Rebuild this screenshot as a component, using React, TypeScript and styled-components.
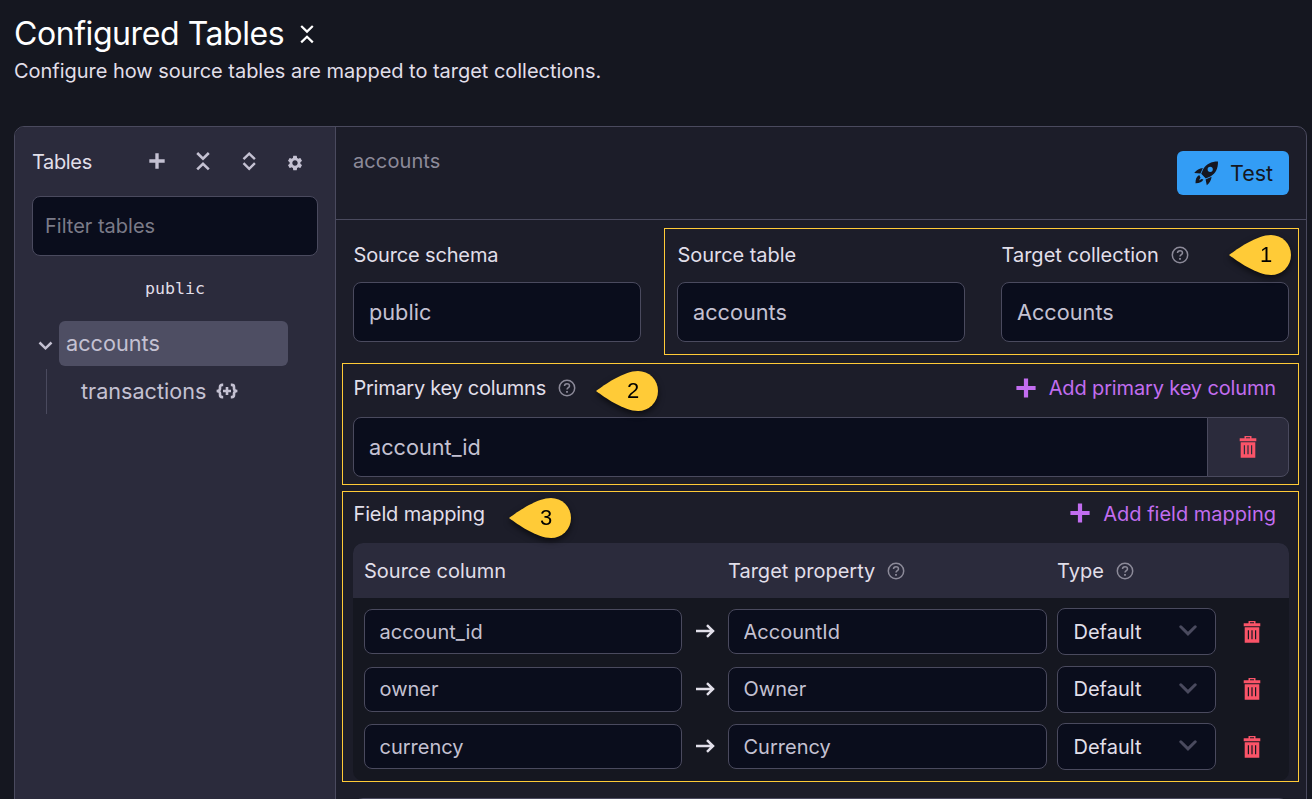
import React from 'react';
import styled, { createGlobalStyle } from 'styled-components';
import { MdSettings } from 'react-icons/md';

const GlobalStyle = createGlobalStyle`
  *, *::before, *::after { box-sizing: border-box; }
  body {
    margin: 0;
    background: #151720;
    color: #e1dfe9;
    font-family: Inter, "Liberation Sans", sans-serif;
    font-size: 20px;
    line-height: 28px;
  }
  input, button { font: inherit; color: inherit; letter-spacing: inherit; }
  svg { display: block; flex: none; }
`;

const Page = styled.main`
  height: 799px;
  overflow: hidden;
  padding: 14px 5px 0 14px;
  display: flex;
  flex-direction: column;
  position: relative;
`;

const Label = styled.span<{ $track?: number; $size?: number }>`
  font-size: ${p => (p.$size ? `${p.$size}px` : 'inherit')};
  letter-spacing: ${p => p.$track ?? 0}px;
  white-space: nowrap;
`;

const Title = styled.h1`
  margin: 0;
  height: 40px;
  display: flex;
  align-items: center;
  gap: 13px;
  color: #fff;
  font-size: 32px;
  font-weight: 400;
  line-height: 40px;
`;

const Subtitle = styled.p`
  margin: 3px 0 41px;
`;

const Panel = styled.section`
  flex: none;
  height: 690px;
  display: flex;
  border: 1px solid #4a4a5e;
  border-radius: 10px;
  overflow: hidden;
  background: #1c1d29;
`;

const Sidebar = styled.aside`
  width: 321px;
  flex: none;
  border-right: 1px solid #4a4a5e;
  background: #2b2b3c;
  padding: 20px 17px;
`;

const SidebarHead = styled.div`
  display: flex;
  align-items: center;
  height: 28px;
  color: #c4c1d2;
`;

const SidebarTitle = styled(Label)`
  width: 114.5px;
  padding-top: 2px;
  color: #e1dfe9;
`;

const IconRow = styled.div`
  display: flex;
  align-items: center;
  gap: 26px;
`;

const GearSlot = styled.span`
  width: 20px;
  display: flex;
  justify-content: center;
  padding-top: 3px;
`;

const Field = styled.input<{ $height?: number; $pad?: number; $size?: number }>`
  display: block;
  width: 100%;
  min-width: 0;
  height: ${p => p.$height ?? 60}px;
  padding: 0 ${p => p.$pad ?? 15}px;
  border: 1px solid #4a4a5e;
  border-radius: 8px;
  background: #0a0d1c;
  color: #c4c1d2;
  font-size: ${p => p.$size ?? 21.7}px;
  outline: none;
  &::placeholder { color: #7b7b88; opacity: 1; }
`;

const FilterField = styled(Field)`
  margin-top: 21px;
`;

const SchemaName = styled.div`
  margin: 19px 0 18px;
  text-align: center;
  font-family: "DejaVu Sans Mono", monospace;
  font-size: 16.6px;
`;

const TreeItem = styled.div`
  display: flex;
  align-items: center;
  height: 45px;
  color: #c4c1d2;
`;

const Twisty = styled.span`
  width: 27px;
  display: flex;
  justify-content: center;
  padding-top: 5px;
`;

const Selected = styled.div`
  width: 229px;
  height: 45px;
  padding: 8px 7px;
  border-radius: 6px;
  background: #4e4e63;
`;

const TreeChild = styled(TreeItem)`
  margin: 3px 0 0 14px;
  padding: 0 0 1px 34px;
  gap: 10px;
  border-left: 1px solid #4a4a5e;
`;

const Content = styled.div`
  flex: 1;
  min-width: 0;
`;

const ContentHead = styled.header`
  height: 93px;
  display: flex;
  align-items: flex-start;
  justify-content: space-between;
  padding: 20px 17px 0;
  border-bottom: 1px solid #4a4a5e;
  color: #8c8a99;
`;

const TestButton = styled.button`
  width: 112px;
  height: 44px;
  margin-top: 4px;
  padding: 0 0 0 17px;
  display: flex;
  align-items: center;
  gap: 11px;
  border: 0;
  border-radius: 6px;
  background: #339df5;
  color: #151720;
`;

const Form = styled.div`
  padding: 20px 17px 0;
`;

const FieldGrid = styled.div`
  display: grid;
  grid-template-columns: repeat(3, 288px);
  gap: 36px;
`;

const FieldLabel = styled.div<{ $bottom?: number }>`
  display: flex;
  align-items: center;
  height: 30px;
  gap: 12px;
  padding-left: 0.5px;
  margin-bottom: ${p => p.$bottom ?? 0}px;
`;

const SectionHead = styled.div`
  display: flex;
  justify-content: space-between;
  align-items: center;
  height: 30px;
`;

const AddButton = styled.button<{ $lift: number }>`
  display: flex;
  align-items: center;
  gap: 13px;
  padding: 0 13px 0 0;
  border: 0;
  background: none;
  color: #c26df0;
  svg { margin-bottom: ${p => p.$lift}px; }
`;

const KeySection = styled.section`
  margin-top: 31px;
`;

const KeyRow = styled.div`
  display: flex;
  margin-top: 14px;
`;

const KeyField = styled(Field)`
  flex: 1;
  border-radius: 8px 0 0 8px;
`;

const KeyDelete = styled.button`
  width: 82px;
  height: 60px;
  margin-left: -1px;
  padding: 0;
  display: grid;
  place-items: center;
  border: 1px solid #4a4a5e;
  border-radius: 0 8px 8px 0;
  background: #2b2b3c;
`;

const MapSection = styled.section`
  margin-top: 22px;
`;

const MapTable = styled.div`
  margin-top: 14px;
  border-radius: 10px;
  overflow: hidden;
  background: #151720;
`;

const MapHead = styled.div`
  display: grid;
  grid-template-columns: 364px 329px 1fr;
  align-items: center;
  height: 55px;
  padding-left: 10.500px;
  background: #2b2b3c;
`;

const MapBody = styled.div`
  display: flex;
  flex-direction: column;
  padding: 10px 0 11px 11px;
  gap: 10.5px;
`;

const MapRow = styled.div`
  display: grid;
  grid-template-columns: 318px 46px 319px 10px 159px 72px;
  align-items: center;
  justify-items: center;
  height: 47px;
`;

const Select = styled.div`
  grid-column: 5;
  width: 159px;
  height: 47px;
  padding: 0 18px 0 15.5px;
  display: flex;
  align-items: center;
  justify-content: space-between;
  border: 1px solid #4a4a5e;
  border-radius: 8px;
  background: #0a0d1c;
`;

const SelectMark = styled.span`
  display: flex;
  padding-bottom: 1px;
  color: #4a4a5e;
`;

const NextCard = styled.div`
  height: 60px;
  margin-top: 17px;
  border: 1px solid #4a4a5e;
  border-radius: 10px;
`;

const Outline = styled.div<{ $x: number; $y: number; $w: number; $h: number }>`
  position: absolute;
  left: ${p => p.$x}px;
  top: ${p => p.$y}px;
  width: ${p => p.$w}px;
  height: ${p => p.$h}px;
  border: 1px solid #ffcb37;
  pointer-events: none;
`;

const Pin = styled.div<{ $x: number; $y: number }>`
  position: absolute;
  left: ${p => p.$x}px;
  top: ${p => p.$y}px;
  width: 62px;
  height: 40px;
  display: grid;
  color: #000;
  filter: drop-shadow(0 3px 3px rgba(0, 0, 0, 0.6));
  > * { grid-area: 1 / 1; }
`;

const PinNumber = styled.span`
  position: relative;
  padding-left: 12px;
  text-align: center;
  line-height: 40px;
  font-family: "Liberation Sans", sans-serif;
  font-size: 22px;
`;

const Plus = ({ inset = 0 }: { inset?: number }) => (
  <svg width="20" height="20" viewBox={`${-inset} ${-inset} ${20 + 2 * inset} ${20 + 2 * inset}`} fill="currentColor">
    <path d="M7.9 0.4h4.200v7.500h7.500v4.200h-7.500v7.500H7.900v-7.500H0.400V7.900h7.500z" />
  </svg>
);

const Collapse = ({ weight = 2.6 }: { weight?: number }) => (
  <svg width="20" height="20" viewBox="0 0 20 20" fill="none" stroke="currentColor" strokeWidth={weight}>
    <path d="M4.2 2 10 7.600l5.800-5.600M4.200 18.400l5.800-5.600 5.800 5.600" />
  </svg>
);

const Expand = () => (
  <svg width="20" height="20" viewBox="0 0 20 20" fill="none" stroke="currentColor" strokeWidth="2.4">
    <path d="M4.500 8.200 10.200 2.600 15.900 8.200M4.500 12.200l5.700 5.600 5.700-5.600" />
  </svg>
);

const Chevron = ({ width = 18, weight = 3, cap = 'round' }: { width?: number; weight?: number; cap?: 'round' | 'butt' }) => (
  <svg width={width} height={width * 0.62} viewBox="0 0 18 11.160" fill="none" stroke="currentColor" strokeWidth={weight} strokeLinecap={cap}>
    <path d="M1.800 1.800 9 8.800l7.200-7" />
  </svg>
);

const Help = () => (
  <svg width="18" height="18" viewBox="0 0 18 18" fill="none" stroke="#8c8a99" strokeWidth="1.5">
    <circle cx="9" cy="9" r="7.700" />
    <path d="M6.500 7.100C6.500 5.500 7.600 4.700 9 4.700s2.500.9 2.500 2.200c0 1.700-2.500 1.900-2.500 3.700" />
    <path d="M9 11.900v1.800" strokeWidth="1.800" />
  </svg>
);

const Trash = () => (
  <svg width="18" height="24" viewBox="0 0 18 24" fill="#fa5468">
    <path fillRule="evenodd" d="M5.500 1h7v2.300H17.300v2.900H.7V3.300h4.800zM7 2.300v1h4v-1z" />
    <path fillRule="evenodd" d="M1.700 7.200h14.600v15.500H1.700zM4.800 10.200v9h1.200v-9zM8.400 10.200v9h1.200v-9zM12 10.200v9h1.200v-9z" />
  </svg>
);

const Arrow = () => (
  <svg width="20" height="15" viewBox="0 0 20 15" fill="none" stroke="#e1dfe9" strokeWidth="2.500">
    <path d="M1 7h17M12 1.200 18 7l-6 5.800" />
  </svg>
);

const BracesPlus = () => (
  <svg width="22" height="16" viewBox="0 0 22 16" fill="none" stroke="currentColor" strokeWidth="2.600">
    <path d="M7.200 1.900H6.200Q4 1.900 4 4v1.500Q4 8 .6 8 4 8 4 10.500V12q0 2.100 2.200 2.100h1" />
    <path d="M14.800 1.900h1Q18 1.900 18 4v1.500Q18 8 21.400 8 18 8 18 10.500V12q0 2.100-2.200 2.100h-1" />
    <path d="M11 4v8M7 8h8" />
  </svg>
);

const Rocket = () => (
  <svg width="25" height="25" viewBox="0 0 25 25" fill="currentColor">
    <path fillRule="evenodd" d="M24 .4C17 .4 12.300 3 9.300 8L7.200 12.800l4.600 4.600 5-2.200C21.600 12.300 24.100 7.500 24 .4zM16.200 5.700a2.600 2.600 0 1 1 0 5.200 2.600 2.600 0 0 1 0-5.200z" />
    <path d="M8.900 7C5.500 7.300 2.500 9 .2 12.100l6.200.5zM17.600 15.800c-.4 3.500-2 6.200-4.800 8.500l-1.200-5.800z" />
    <path d="M5.200 14C2.300 15.500 1.500 18.400 1.500 22.200c3.800.1 6.500-.8 7.900-3.600l-1.800-.6-2.600 1.400 1.500-2.900z" />
  </svg>
);

const pins = [
  { n: 1, x: 1229, y: 235 },
  { n: 2, x: 596, y: 371 },
  { n: 3, x: 509, y: 498 },
];

const mappings = [
  { source: 'account_id', target: 'AccountId' },
  { source: 'owner', target: 'Owner' },
  { source: 'currency', target: 'Currency' },
];

export default function App() {
  return (
    <Page>
      <GlobalStyle />
      <Title>
        <Label $track={-0.43}>Configured Tables</Label>
        <Collapse weight={2.2} />
      </Title>
      <Subtitle><Label $track={-0.03}>Configure how source tables are mapped to target collections.</Label></Subtitle>

      <Panel>
        <Sidebar>
          <SidebarHead>
            <SidebarTitle $track={-0.35}>Tables</SidebarTitle>
            <IconRow>
              <Plus inset={2.5} />
              <Collapse />
              <Expand />
              <GearSlot><MdSettings size={18} /></GearSlot>
            </IconRow>
          </SidebarHead>
          <FilterField placeholder="Filter tables" $pad={12} $size={20} />
          <SchemaName>public</SchemaName>
          <TreeItem>
            <Twisty><Chevron width={15} cap="butt" /></Twisty>
            <Selected><Label $size={21.7}>accounts</Label></Selected>
          </TreeItem>
          <TreeChild>
            <Label $size={21.6}>transactions</Label>
            <BracesPlus />
          </TreeChild>
        </Sidebar>

        <Content>
          <ContentHead>
            <Label $track={0.1}>accounts</Label>
            <TestButton><Rocket /><Label $size={21.5}>Test</Label></TestButton>
          </ContentHead>
          <Form>
            <FieldGrid>
              <div>
                <FieldLabel $bottom={12}><Label $track={-0.15}>Source schema</Label></FieldLabel>
                <Field defaultValue="public" />
              </div>
              <div>
                <FieldLabel $bottom={12}><Label $track={-0.05}>Source table</Label></FieldLabel>
                <Field defaultValue="accounts" />
              </div>
              <div>
                <FieldLabel $bottom={12}><Label>Target collection</Label><Help /></FieldLabel>
                <Field defaultValue="Accounts" />
              </div>
            </FieldGrid>

            <KeySection>
              <SectionHead>
                <FieldLabel><Label $track={-0.27}>Primary key columns</Label><Help /></FieldLabel>
                <AddButton $lift={1}><Plus /><Label $track={-0.14}>Add primary key column</Label></AddButton>
              </SectionHead>
              <KeyRow>
                <KeyField defaultValue="account_id" />
                <KeyDelete><Trash /></KeyDelete>
              </KeyRow>
            </KeySection>

            <MapSection>
              <SectionHead>
                <FieldLabel><Label $track={-0.14}>Field mapping</Label></FieldLabel>
                <AddButton $lift={3}><Plus /><Label>Add field mapping</Label></AddButton>
              </SectionHead>
              <MapTable>
                <MapHead>
                  <FieldLabel><Label>Source column</Label></FieldLabel>
                  <FieldLabel><Label>Target property</Label><Help /></FieldLabel>
                  <FieldLabel><Label>Type</Label><Help /></FieldLabel>
                </MapHead>
                <MapBody>
                  {mappings.map(m => (
                    <MapRow key={m.source}>
                      <Field $height={45} $size={20} $pad={14.5} defaultValue={m.source} />
                      <Arrow />
                      <Field $height={45} $size={20} $pad={14.5} defaultValue={m.target} />
                      <Select>
                        <Label>Default</Label>
                        <SelectMark><Chevron /></SelectMark>
                      </Select>
                      <Trash />
                    </MapRow>
                  ))}
                </MapBody>
              </MapTable>
            </MapSection>
            <NextCard />
          </Form>
        </Content>
      </Panel>

      <Outline $x={664} $y={228} $w={635} $h={127} />
      <Outline $x={342} $y={363} $w={957} $h={122} />
      <Outline $x={342} $y={491} $w={957} $h={291} />
      {pins.map(p => (
        <Pin key={p.n} $x={p.x} $y={p.y}>
          <svg width="62" height="40" viewBox="0 0 62 40" fill="#ffcb37">
            <path d="M0 20C8 14 28 0 42 0a20 20 0 0 1 0 40C28 40 8 26 0 20z" />
          </svg>
          <PinNumber>{p.n}</PinNumber>
        </Pin>
      ))}
    </Page>
  );
}
